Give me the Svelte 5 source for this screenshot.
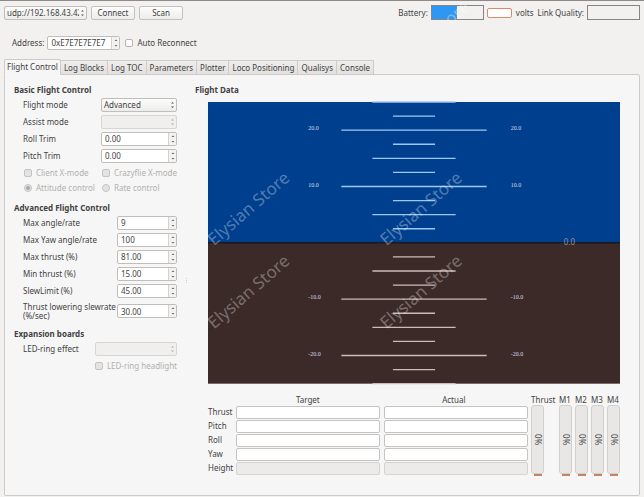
<script>
  let activeTab = $state('Flight Control');
  let autoReconnect = $state(false);

  const tabs = [
    'Flight Control',
    'Log Blocks',
    'Log TOC',
    'Parameters',
    'Plotter',
    'Loco Positioning',
    'Qualisys',
    'Console'
  ];

  let address = $state({ id: 'address', value: '0xE7E7E7E7E7' });

  let trims = $state([
    { id: 'roll-trim', label: 'Roll Trim', value: '0.00' },
    { id: 'pitch-trim', label: 'Pitch Trim', value: '0.00' }
  ]);

  let limits = $state([
    { id: 'max-angle', label: 'Max angle/rate', value: '9' },
    { id: 'max-yaw', label: 'Max Yaw angle/rate', value: '100' },
    { id: 'max-thrust', label: 'Max thrust (%)', value: '81.00' },
    { id: 'min-thrust', label: 'Min thrust (%)', value: '15.00' },
    { id: 'slew-limit', label: 'SlewLimit (%)', value: '45.00' },
    { id: 'slew-rate', label: 'Thrust lowering slewrate (%/sec)', value: '30.00', tall: true }
  ]);

  const readings = ['Thrust', 'Pitch', 'Roll', 'Yaw', 'Height'];
  const motors = ['M1', 'M2', 'M3', 'M4'];

  // Attitude indicator geometry, in viewBox units
  const horizon = 140.5;
  const center = 205.5;
  const degree = 5.62;

  /**
   * Pitch ladder, one rung every 2.5 degrees
   */
  const rungs = [];
  for (let pitch = -25; pitch <= 25; pitch += 2.5) {
    if (pitch === 0) continue;
    const half = pitch % 10 === 0 ? 72.5 : pitch % 5 === 0 ? 41.5 : 21;
    rungs.push({ pitch, half, y: horizon - pitch * degree });
  }

  const watermarks = [
    { x: 6, y: 144 },
    { x: 178, y: 144 },
    { x: 6, y: 227 },
    { x: 178, y: 227 }
  ];

  /**
   * Step a spin box, keeping its number of decimals
   */
  function step(field, delta) {
    const n = Number(field.value);
    if (field.value.startsWith('0x')) {
      field.value = '0x' + (n + delta).toString(16).toUpperCase();
      return;
    }
    const decimals = (field.value.split('.')[1] || '').length;
    field.value = (n + delta).toFixed(decimals);
  }
</script>

{#snippet arrows()}
  <svg class="arrows" viewBox="0 0 5 8" aria-hidden="true">
    <path d="M1 2.5 2.5 1 4 2.5zM1 5.5 2.5 7 4 5.5z" />
  </svg>
{/snippet}

{#snippet spinBox(field)}
  <span class="spin">
    <input id={field.id} type="text" bind:value={field.value} />
    <span class="steps">
      <button aria-label="Increase" onclick={() => step(field, 1)}>
        <svg viewBox="0 0 4 2"><path d="M0.5 2 2 0.5 3.5 2z" /></svg>
      </button>
      <button aria-label="Decrease" onclick={() => step(field, -1)}>
        <svg viewBox="0 0 4 2"><path d="M0.5 0 2 1.5 3.5 0z" /></svg>
      </button>
    </span>
  </span>
{/snippet}

{#snippet gauge(name)}
  <div class="gauge">
    <span class="gauge-name">{name}</span>
    <div class="gauge-track" role="meter" aria-label={name} aria-valuenow="0" aria-valuemin="0" aria-valuemax="100">
      <span>0%</span>
    </div>
    <div class="gauge-fill"></div>
  </div>
{/snippet}

<div class="window">
  <header class="toolbar">
    <span class="combo uri">
      <select aria-label="Interface">
        <option>udp://192.168.43.42:2390</option>
      </select>
      {@render arrows()}
    </span>
    <button class="push">Connect</button>
    <button class="push">Scan</button>

    <div class="status">
      <span>Battery:</span>
      <div class="level" role="meter" aria-label="Battery" aria-valuenow="50" aria-valuemin="0" aria-valuemax="100">
        <div class="level-fill" style="width: 50%"></div>
        <svg class="level-mark" viewBox="0 0 52 13" aria-hidden="true">
          <text transform="translate(19 20) rotate(-41)">ore</text>
        </svg>
      </div>
      <input class="voltage" type="text" aria-label="Battery voltage" readonly />
      <span class="unit">volts</span>
      <span>Link Quality:</span>
      <div class="level" role="meter" aria-label="Link quality" aria-valuenow="0" aria-valuemin="0" aria-valuemax="100"></div>
    </div>
  </header>

  <div class="address-row">
    <label for="address">Address:</label>
    {@render spinBox(address)}
    <label class="check">
      <input type="checkbox" bind:checked={autoReconnect} />
      Auto Reconnect
    </label>
  </div>

  <div class="tabs" role="tablist">
    {#each tabs as tab}
      <button
        class="tab"
        class:active={activeTab === tab}
        role="tab"
        aria-selected={activeTab === tab}
        onclick={() => (activeTab = tab)}
      >{tab}</button>
    {/each}
  </div>

  <main class="pane">
    <div class="settings">
      <section>
        <h2>Basic Flight Control</h2>
        <div class="rows">
          <div class="row">
            <label for="flight-mode">Flight mode</label>
            <span class="combo medium">
              <select id="flight-mode">
                <option>Advanced</option>
                <option>Normal</option>
              </select>
              {@render arrows()}
            </span>
          </div>
          <div class="row">
            <label for="assist-mode">Assist mode</label>
            <span class="combo medium disabled">
              <select id="assist-mode" disabled></select>
              {@render arrows()}
            </span>
          </div>
          {#each trims as field}
            <div class="row">
              <label for={field.id}>{field.label}</label>
              <div class="medium">{@render spinBox(field)}</div>
            </div>
          {/each}
          <div class="options">
            <label class="check disabled"><input type="checkbox" disabled /> Client X-mode</label>
            <label class="check disabled"><input type="checkbox" disabled /> Crazyflie X-mode</label>
            <label class="check disabled"><input type="radio" name="control" checked disabled /> Attitude control</label>
            <label class="check disabled"><input type="radio" name="control" disabled /> Rate control</label>
          </div>
        </div>
      </section>

      <section>
        <h2>Advanced Flight Control</h2>
        <div class="rows">
          {#each limits as field}
            <div class="row" class:tall={field.tall}>
              <label for={field.id}>{field.label}</label>
              <div class="narrow">{@render spinBox(field)}</div>
            </div>
          {/each}
        </div>
      </section>

      <section>
        <h2>Expansion boards</h2>
        <div class="rows">
          <div class="row">
            <label for="led-effect">LED-ring effect</label>
            <span class="combo wide disabled">
              <select id="led-effect" disabled></select>
              {@render arrows()}
            </span>
          </div>
          <div class="row end">
            <label class="check disabled"><input type="checkbox" disabled /> LED-ring headlight</label>
          </div>
        </div>
      </section>
    </div>

    <div class="splitter"><i></i><i></i><i></i></div>

    <section class="flight-data">
      <h2>Flight Data</h2>
      <div class="flight-body">
        <svg class="horizon" viewBox="0 0 411 281" role="img" aria-label="Attitude indicator">
          <rect class="sky" width="411" height="141" />
          <rect class="ground" y="140" width="411" height="141" />
          <rect class="horizon-line" y="140" width="411" height="1" />
          {#each rungs as rung}
            <line
              class="rung"
              class:below={rung.pitch < 0}
              x1={center - rung.half}
              x2={center + rung.half}
              y1={rung.y}
              y2={rung.y}
            />
            {#if rung.pitch % 10 === 0}
              <text class="degrees" x="100" y={rung.y}>{rung.pitch.toFixed(1)}</text>
              <text class="degrees" x="302" y={rung.y}>{rung.pitch.toFixed(1)}</text>
            {/if}
          {/each}
          <text class="heading" x="355" y="143">0.0</text>
          {#each watermarks as mark}
            <text class="watermark" transform="translate({mark.x} {mark.y}) rotate(-41)">Elysian Store</text>
          {/each}
        </svg>

        <div class="readout">
          <table>
            <thead>
              <tr><td></td><th scope="col">Target</th><th scope="col">Actual</th></tr>
            </thead>
            <tbody>
              {#each readings as name}
                <tr>
                  <th scope="row">{name}</th>
                  <td><input type="text" aria-label="{name} target" disabled={name === 'Height'} readonly /></td>
                  <td><input type="text" aria-label="{name} actual" disabled={name === 'Height'} readonly /></td>
                </tr>
              {/each}
            </tbody>
          </table>
          <div class="gauges">
            {@render gauge('Thrust')}
            <div class="motors">
              {#each motors as motor}
                {@render gauge(motor)}
              {/each}
            </div>
          </div>
        </div>
      </div>
    </section>
  </main>
</div>

<style>
  :global(body) {
    background: #f2f1f0;
  }

  .window {
    display: flex;
    flex-direction: column;
    box-sizing: border-box;
    min-height: 100vh;
    padding: 4px 4px 1px;
    border-top: 1px solid #8e8a88;
    color: #424242;
    font-family: 'Noto Sans', 'Open Sans', sans-serif;
    font-size: 8px;
    line-height: 10px;
  }

  .window * {
    box-sizing: border-box;
  }

  button,
  input,
  select {
    margin: 0;
    padding: 0;
    color: inherit;
    font: inherit;
  }

  h2 {
    height: 15px;
    margin: 0;
    font-size: 8px;
    line-height: 14px;
  }

  /* Toolbar */
  .toolbar {
    display: flex;
    align-items: center;
    gap: 4px;
    height: 15px;
  }

  .push {
    width: 44px;
    height: 14px;
    border: 1px solid #c4c1be;
    border-radius: 2px;
    background: linear-gradient(#fdfdfd, #ececeb);
  }

  .status {
    display: flex;
    align-items: center;
    gap: 3px;
    margin-left: auto;
  }

  .unit {
    margin: 0 1px;
  }

  .level {
    position: relative;
    width: 53px;
    height: 15px;
    border: 1px solid #858585;
  }

  .level-fill {
    height: 100%;
    background: #3096f4;
  }

  .level-mark {
    position: absolute;
    inset: 0;
    width: 100%;
    height: 100%;
    overflow: visible;
    pointer-events: none;
  }

  .level-mark text {
    fill: rgba(255, 255, 255, 0.35);
    font-size: 17px;
  }

  .voltage {
    width: 25px;
    height: 10px;
    border: 1px solid #dd8a6c;
    border-radius: 2px;
    background: #fff;
  }

  .address-row {
    display: flex;
    align-items: center;
    gap: 3px;
    margin: 16px 0 9px 8px;
  }

  .address-row .spin {
    width: 73px;
  }

  .address-row .check {
    margin-left: 2px;
  }

  /* Combo boxes */
  .combo {
    position: relative;
    display: block;
    height: 14px;
  }

  .combo select {
    display: block;
    width: 100%;
    height: 100%;
    padding: 0 7px 0 2px;
    border: 1px solid #c0bdba;
    border-radius: 2px;
    background: linear-gradient(#fdfdfd, #ececeb);
    appearance: none;
    overflow: hidden;
    white-space: nowrap;
  }

  .combo.disabled select {
    border-color: #d8d6d4;
    background: #f0efee;
    opacity: 1;
  }

  .uri {
    width: 83px;
  }

  .arrows {
    position: absolute;
    top: 3px;
    right: 2px;
    width: 5px;
    height: 8px;
    fill: #555;
    pointer-events: none;
  }

  .disabled .arrows {
    fill: #aaa;
  }

  /* Spin boxes */
  .spin {
    display: flex;
    height: 14px;
    border: 1px solid #c0bdba;
    border-radius: 2px;
    background: #fff;
    overflow: hidden;
  }

  .spin input {
    flex: 1;
    min-width: 0;
    padding-left: 3px;
    border: 0;
    background: none;
  }

  .steps {
    display: flex;
    flex-direction: column;
    width: 8px;
    border-left: 1px solid #d4d2d0;
    background: #f3f2f1;
  }

  .steps button {
    display: flex;
    flex: 1;
    align-items: center;
    justify-content: center;
    border: 0;
    background: none;
  }

  .steps svg {
    width: 4px;
    height: 2px;
    fill: #666;
  }

  /* Check boxes and radio buttons */
  .check {
    display: flex;
    align-items: center;
    gap: 4px;
    white-space: nowrap;
  }

  .check input {
    display: grid;
    place-items: center;
    width: 8px;
    height: 8px;
    border: 1px solid #b5b2af;
    border-radius: 2px;
    background: #fff;
    appearance: none;
  }

  .check input[type='radio'] {
    border-radius: 50%;
  }

  .check input:checked::before {
    content: '';
    width: 4px;
    height: 4px;
    border-radius: 50%;
    background: #777;
  }

  .check.disabled {
    color: #b1b0af;
  }

  .check.disabled input {
    border-color: #c6c4c2;
    background: #e4e3e2;
  }

  .check.disabled input:checked::before {
    background: #a9a8a7;
  }

  /* Tabs */
  .tabs {
    position: relative;
    display: flex;
    align-items: flex-end;
    height: 16px;
    margin-bottom: -1px;
  }

  .tab {
    height: 15px;
    padding: 0 3px;
    border: 1px solid #cdcac8;
    border-left-width: 0;
    background: linear-gradient(#efeeed, #e2e1e0);
    white-space: nowrap;
  }

  .tab.active {
    height: 16px;
    padding: 0 2px;
    border-left-width: 1px;
    border-bottom-color: #f7f6f6;
    border-radius: 2px 2px 0 0;
    background: #f7f6f6;
  }

  .pane {
    display: flex;
    flex: 1;
    padding: 8px 19px 18px 9px;
    border: 1px solid #cdcac8;
    border-radius: 0 2px 2px 2px;
    background: #f7f6f6;
  }

  /* Settings column */
  .settings {
    display: flex;
    flex-direction: column;
    gap: 6px;
    width: 163px;
  }

  .rows {
    display: flex;
    flex-direction: column;
    gap: 3px;
    padding-left: 9px;
  }

  .row {
    display: flex;
    align-items: center;
    justify-content: space-between;
    height: 14px;
  }

  .row.tall {
    height: 20px;
    line-height: 9px;
  }

  .row.end {
    justify-content: flex-end;
  }

  .narrow {
    flex: none;
    width: 60px;
  }

  .medium {
    width: 76px;
  }

  .wide {
    width: 82px;
  }

  .options {
    display: grid;
    grid-template-columns: 78px 1fr;
    grid-auto-rows: 14px;
    row-gap: 1px;
    padding-left: 1px;
  }

  .splitter {
    display: flex;
    flex-direction: column;
    align-self: center;
    align-items: center;
    gap: 1px;
    width: 18px;
  }

  .splitter i {
    width: 1px;
    height: 1px;
    background: #cfcdcb;
  }

  /* Flight data */
  .flight-data {
    flex: 1;
    min-width: 0;
  }

  .flight-body {
    padding: 4px 0 0 13px;
  }

  .horizon {
    display: block;
    width: 100%;
    overflow: visible;
  }

  .sky {
    fill: #003f8e;
  }

  .ground {
    fill: #3c2a28;
  }

  .horizon-line {
    fill: #0a0f1c;
  }

  .rung {
    stroke: #9cc8f2;
    stroke-width: 1.3;
  }

  .rung.below {
    stroke: #cdbcb8;
  }

  .degrees {
    fill: #d5dcea;
    font-family: 'Liberation Serif', serif;
    font-size: 6px;
  }

  .heading {
    fill: #8f8f99;
    font-size: 8px;
  }

  .watermark {
    fill: rgba(255, 255, 255, 0.32);
    font-size: 17px;
  }

  .readout {
    display: flex;
    gap: 3px;
    margin-top: 11px;
  }

  table {
    flex: 1;
    border-collapse: collapse;
    table-layout: fixed;
  }

  th,
  td {
    height: 14px;
    padding: 0 0 1px;
    font-weight: normal;
  }

  thead th,
  thead td {
    height: 11px;
    padding: 0;
  }

  thead td {
    width: 28px;
  }

  tbody th {
    text-align: left;
  }

  td + td {
    padding-left: 4px;
  }

  td input {
    display: block;
    width: 100%;
    height: 13px;
    border: 1px solid #c6c3c0;
    border-radius: 2px;
    background: #fff;
  }

  td input:disabled {
    border-color: #d6d4d2;
    background: #ecebea;
  }

  .gauges {
    display: flex;
    gap: 15px;
  }

  .motors {
    display: flex;
    gap: 3px;
  }

  .gauge {
    display: flex;
    flex-direction: column;
    align-items: center;
    width: 13px;
  }

  .gauge-name {
    align-self: flex-start;
    height: 10px;
    white-space: nowrap;
  }

  .gauge-track {
    display: flex;
    flex-direction: column;
    align-items: center;
    justify-content: center;
    width: 100%;
    height: 69px;
    border: 1px solid #d2d0ce;
    border-radius: 3px;
    background: #e8e7e6;
  }

  .gauge-track span {
    writing-mode: vertical-rl;
  }

  .gauge-fill {
    width: 8px;
    height: 2px;
    background: #c8835a;
  }
</style>
